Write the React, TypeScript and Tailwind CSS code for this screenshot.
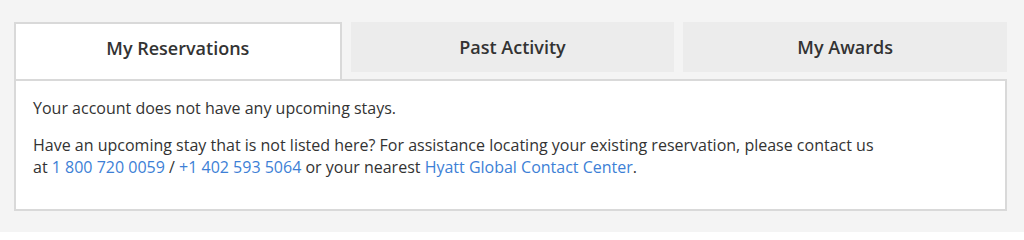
import React, { useState } from 'react';

const tabs = ['My Reservations', 'Past Activity', 'My Awards'];

export default function App() {
    const [active, setActive] = useState(0);

    return (
        <div className="min-h-[232px] w-full bg-[#f4f4f4] px-[14px] pt-[22px] font-['Open_Sans',sans-serif] text-[#333333]">
            <div className="w-[993px]">
                <div className="flex items-start gap-[9px]">
                    {tabs.map((label, i) =>
                        i === active ? (
                            <button
                                key={label}
                                onClick={() => setActive(i)}
                                className="flex h-[57px] flex-1 items-center justify-center border-2 border-b-0 border-[#d9d9d9] bg-white pb-[7px] text-[18px] font-semibold"
                            >
                                {label}
                            </button>
                        ) : (
                            <button
                                key={label}
                                onClick={() => setActive(i)}
                                className="flex h-[50px] flex-1 items-center justify-center bg-[#ececec] text-[18px] font-semibold"
                            >
                                {label}
                            </button>
                        )
                    )}
                </div>
                <div className="border-2 border-[#d9d9d9] bg-white px-[17px] pb-[31px] pt-[16px] text-[16px] leading-[22px]">
                    <p className="mb-[15px]">
                        Your account does not have any upcoming stays.
                    </p>
                    <p>
                        Have an upcoming stay that is not listed here? For
                        assistance locating your existing reservation, please
                        contact us
                        <br />
                        at{' '}
                        <a href="#" className="text-[#3d7fd6]">
                            1 800 720 0059
                        </a>{' '}
                        /{' '}
                        <a href="#" className="text-[#3d7fd6]">
                            +1 402 593 5064
                        </a>{' '}
                        or your nearest{' '}
                        <a href="#" className="text-[#3d7fd6]">
                            Hyatt Global Contact Center
                        </a>
                        .
                    </p>
                </div>
            </div>
        </div>
    );
}
